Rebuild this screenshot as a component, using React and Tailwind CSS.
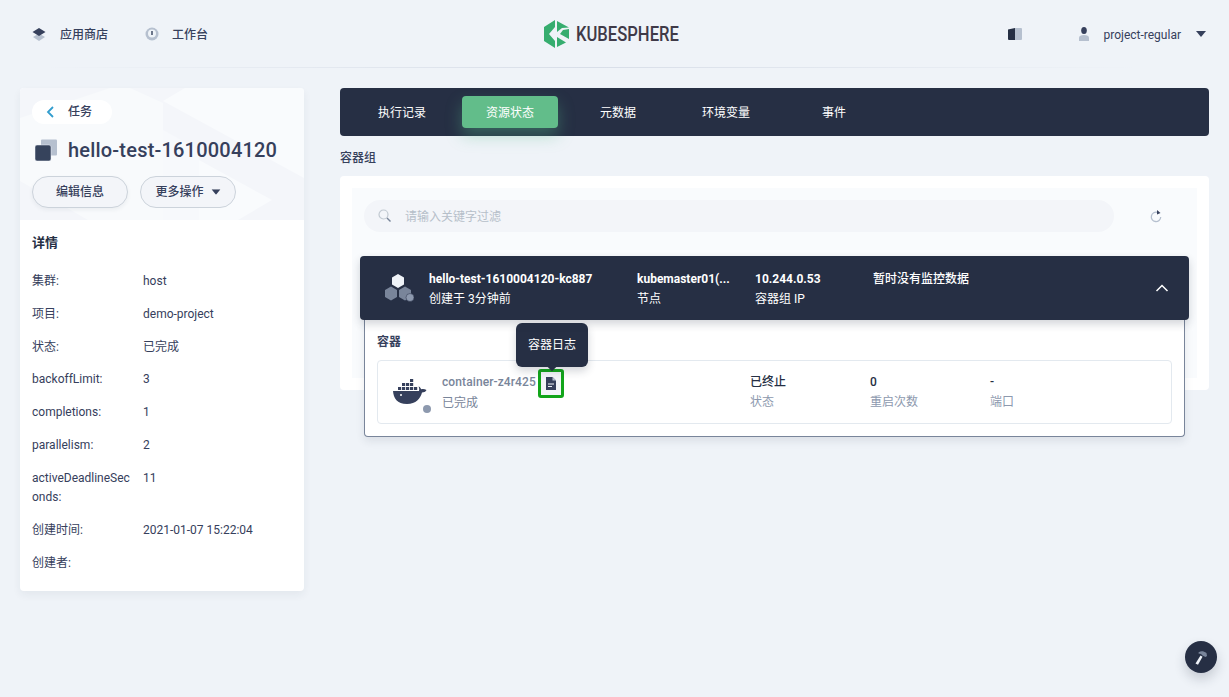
import React from "react";

function Layers() {
  return (
    <svg width="14" height="14" viewBox="0 0 14 14">
      <path d="M7 6.500 1 10 7 14l6-4z" fill="#b6c0cf" />
      <path d="M7 1 .5 5 7 9l6.500-4z" fill="#36405c" />
    </svg>
  );
}
function Gauge() {
  return (
    <svg width="14" height="14" viewBox="0 0 14 14">
      <circle cx="7" cy="7" r="6.500" fill="#b6c0cf" />
      <circle cx="7" cy="6.500" r="4" fill="#eff3f8" />
      <rect x="6.300" y="4" width="1.400" height="4" fill="#36405c" />
    </svg>
  );
}
function Caret({ className = "" }) {
  return (
    <svg width="10" height="6" viewBox="0 0 10 6" className={className}>
      <path d="M0 0h10L5 6z" fill="#36405c" />
    </svg>
  );
}
function Logo() {
  return (
    <svg width="26" height="28" viewBox="0 0 26 28">
      <path d="M0 7 11 0V7L5 14l6 7v7L0 21z" fill="#36ad6f" />
      <path d="M13 1 25 7.500 18 8 13 12z" fill="#36ad6f" />
      <path d="M19 10 25 9V19L16 14z" fill="#36ad6f" />
      <path d="M13 17 22 22.500 13 27z" fill="#36ad6f" />
    </svg>
  );
}
function Book() {
  return (
    <svg width="14" height="12" viewBox="0 0 14 12">
      <path d="M0 1.500 7 0v12H1a1 1 0 0 1-1-1z" fill="#262f44" />
      <path d="M7 0h6a1 1 0 0 1 1 1v10a1 1 0 0 1-1 1H7z" fill="#b6c0cf" />
    </svg>
  );
}
function User() {
  return (
    <svg width="12" height="14" viewBox="0 0 12 14">
      <ellipse cx="6" cy="3.500" rx="2.800" ry="3.500" fill="#36405c" />
      <path d="M1 14V10.500C1 9 3 8 6 8s5 1 5 2.500V14z" fill="#b6c0cf" />
    </svg>
  );
}
function Stack() {
  return (
    <svg width="22" height="22" viewBox="0 0 22 22">
      <path d="M6 1.500a1 1 0 0 1 1-1h14a1 1 0 0 1 1 1v14a1 1 0 0 1-1 1H7a1 1 0 0 1-1-1z" fill="#b6c0cf" />
      <rect x="0" y="6" width="16" height="16" rx="2" fill="#36435c" stroke="#eff3f8" strokeWidth="0.500" />
    </svg>
  );
}
function Hexes() {
  return (
    <svg width="32" height="28" viewBox="0 0 32 28">
      <path d="M14 0l6 3.500v7L14 14l-6-3.500v-7z" fill="#eff3f8" />
      <path d="M7 12.500l6 3.500v7l-6 3.500L1 23v-7z" fill="#79859a" />
      <path d="M21 12.500l6 3.500v7l-6 3.500L15 23v-7z" fill="#79859a" />
      <circle cx="26" cy="23.500" r="4" fill="#8d99ae" stroke="#262f44" strokeWidth="0.500" />
    </svg>
  );
}
function Docker() {
  return (
    <svg width="34" height="25" viewBox="0 0 34 25">
      <g fill="#36405c">
        <rect x="5" y="8" width="3.200" height="3" />
        <rect x="9" y="8" width="3.200" height="3" />
        <rect x="13" y="8" width="3.200" height="3" />
        <rect x="17" y="8" width="3.200" height="3" />
        <rect x="9" y="4" width="3.200" height="3" />
        <rect x="13" y="4" width="3.200" height="3" />
        <rect x="17" y="4" width="3.200" height="3" />
        <rect x="17" y="0" width="3.200" height="3" />
        <rect x="21" y="8" width="3.200" height="3" />
        <path d="M0 12h26c.5-2 0-3.500-.5-4.500 1 .3 2 1 2.700 2.800 1.500-.6 3.500-.4 5.300.7-1 1.800-2.600 2.400-4.500 2.500C27.500 19.500 23 25 14 25 4 25 .5 19 0 12z" />
      </g>
      <circle cx="8" cy="16" r="1" fill="#fff" />
    </svg>
  );
}
function DocIcon() {
  return (
    <svg width="12" height="13" viewBox="0 0 12 13">
      <path d="M1 0h6.500L11 3.500V13H1z" fill="#36405c" />
      <path d="M7.500 0 11 3.500H7.500z" fill="#b6c0cf" />
      <path d="M3 6.500h6v1H3zM3 9h4v1H3z" fill="#eff3f8" />
    </svg>
  );
}
function Refresh() {
  return (
    <svg width="12" height="13" viewBox="0 0 12 13">
      <path d="M7.500 2.400A4.700 4.700 0 1 0 10.700 7" fill="none" stroke="#b6c0cf" strokeWidth="1.300" />
      <path d="M7 0l3.500 3L7 4.500z" fill="#36405c" />
    </svg>
  );
}
function Search() {
  return (
    <svg width="14" height="14" viewBox="0 0 14 14">
      <circle cx="5.500" cy="5.500" r="4.500" fill="none" stroke="#c1c9d1" strokeWidth="1.200" />
      <path d="M9 9l3.500 3.500" stroke="#79859a" strokeWidth="1.400" />
    </svg>
  );
}
function Hammer() {
  return (
    <svg width="16" height="16" viewBox="0 0 16 16">
      <path d="M2.500 14.500 7.500 6.500l2 1.200-4.500 8z" fill="#eff3f8" />
      <path d="M5.500 3.500C8 1.500 10.500 2 13.500 4l.5 3-1.500 1-3-1.500L8 5 5.500 4.500z" fill="#79859a" />
    </svg>
  );
}
function HeaderPattern() {
  return (
    <svg className="absolute inset-0 w-full h-full" viewBox="0 0 284 132" preserveAspectRatio="none">
      <path d="M143 13 165 0H284V90z" fill="#f9fbfd" />
      <path d="M0 30 90 0h20L143 15V132H68L0 93z" fill="#f8fafc" />
      <path d="M143 42 179 62V132H143z" fill="#f7f9fc" />
      <path d="M179 72 252 112 218 132H179z" fill="#f9fbfd" />
    </svg>
  );
}

const details = [
  ["集群:", "host"],
  ["项目:", "demo-project"],
  ["状态:", "已完成"],
  ["backoffLimit:", "3"],
  ["completions:", "1"],
  ["parallelism:", "2"],
  ["activeDeadlineSeconds:", "11"],
  ["创建时间:", "2021-01-07 15:22:04"],
  ["创建者:", ""],
];

const tabs = [
  ["执行记录", "w-[96px] mr-[12px]", false],
  ["资源状态", "w-[96px]", true],
  ["元数据", "w-[120px]", false],
  ["环境变量", "w-[96px]", false],
  ["事件", "w-[120px]", false],
];

export default function App() {
  return (
    <div
      className="relative w-[1229px] h-[697px] overflow-hidden bg-[#eff3f8] text-[#262f44] text-xs antialiased"
      style={{ fontFamily: 'Roboto, "Noto Sans CJK SC", sans-serif' }}
    >
      <header className="relative h-[68px] flex items-center pl-[32px] pr-[23px]">
        <div className="flex items-center w-[500px]">
          <Layers />
          <span className="ml-[14px] pt-[2px] font-medium text-[#36405c]">应用商店</span>
          <span className="ml-[37px]"><Gauge /></span>
          <span className="ml-[13px] pt-[2px] font-medium text-[#36405c]">工作台</span>
        </div>
        <div className="flex items-center ml-[12px]">
          <Logo />
          <span className="ml-[6px] w-[103px] text-[20px] leading-none font-medium text-[#3f3a48] origin-left scale-x-[0.83] whitespace-nowrap">KUBESPHERE</span>
        </div>
        <div className="ml-auto flex items-center">
          <Book />
          <span className="ml-[56px]"><User /></span>
          <span className="ml-[14px] pt-[1px] text-[#36405c]">project-regular</span>
          <span className="ml-[15px]"><Caret /></span>
        </div>
        <div className="absolute bottom-0 left-[40px] w-[1100px] h-px bg-gradient-to-r from-transparent via-[#d8dee8] to-transparent" />
      </header>

      <div className="flex items-start pt-[20px] pl-[20px] pr-[20px] gap-[36px]">
        <aside className="w-[284px] h-[503px] shrink-0 bg-white rounded shadow-[0_4px_8px_rgba(36,46,66,0.06)] overflow-hidden">
          <div className="relative h-[132px] bg-[#f4f6fa]">
            <HeaderPattern />
            <div className="relative px-[12px] pt-[12px]">
              <div className="w-[80px] h-[24px] rounded-full bg-white flex items-center pl-[14px]">
                <svg width="8" height="12" viewBox="0 0 8 12"><path d="M7 1 2 6l5 5" fill="none" stroke="#329dce" strokeWidth="1.800" /></svg>
                <span className="ml-[14px] font-medium text-[#36405c]">任务</span>
              </div>
              <div className="flex items-center mt-[15px] h-[22px]">
                <span className="ml-[3px]"><Stack /></span>
                <span className="ml-[11px] text-[20px] leading-[28px] font-medium tracking-[0.2px] text-[#36405c] whitespace-nowrap">hello-test-1610004120</span>
              </div>
              <div className="flex gap-[12px] mt-[15px]">
                <button className="w-[96px] h-[32px] rounded-full border border-[#ccd3db] bg-[#f3f5f9] font-medium text-[#36405c] shadow-[0_2px_4px_rgba(36,46,66,0.06)]">编辑信息</button>
                <button className="w-[96px] h-[32px] rounded-full border border-[#ccd3db] bg-[#f3f5f9] font-medium text-[#36405c] flex items-center justify-center gap-[7px]">
                  更多操作<Caret className="scale-90" />
                </button>
              </div>
            </div>
          </div>
          <div className="px-[12px] pt-[13px]">
            <h3 className="text-[13px] leading-[20px] font-semibold text-[#262f44]">详情</h3>
            <dl className="mt-[12.200px]">
              {details.map(([k, v]) => (
                <div key={k} className="flex py-[6.800px] leading-[19.200px] min-h-[32.800px]">
                  <dt className="w-[111px] pr-[8px] shrink-0 text-[#36405c] break-all">{k}</dt>
                  <dd className="text-[#36405c]">{v}</dd>
                </div>
              ))}
            </dl>
          </div>
        </aside>

        <main className="flex-1 min-w-0">
          <nav className="h-[48px] rounded bg-[#262f44] flex items-center pl-[14px]">
            {tabs.map(([t, w, active]) => (
              <div key={t} className={`${w} h-[32px] pt-[1px] flex items-center justify-center ${active ? "rounded bg-[#62bd8a] shadow-[0_8px_16px_rgba(85,188,138,0.36)]" : ""} text-white`}>
                {t}
              </div>
            ))}
          </nav>
          <h4 className="mt-[12px] h-[20px] leading-[20px] font-medium text-[#36405c]">容器组</h4>
          <section className="relative mt-[8px] h-[214px] bg-white rounded p-[12px]">
            <div className="h-full bg-[#f9fbfd] pl-[12px] pr-[8px] pt-[12px]">
              <div className="flex items-center">
                <div className="w-[750px] h-[32px] rounded-full bg-[#f3f5f9] flex items-center pl-[14px] text-[#c1c9d1]">
                  <Search />
                  <span className="ml-[13px] pt-[1px] text-[#b6bfc9]">请输入关键字过滤</span>
                </div>
                <span className="ml-[36px]"><Refresh /></span>
              </div>
            </div>
            <div className="absolute left-[20px] top-[80px] w-[829px] z-10">
              <div className="h-[64px] rounded bg-[#262f44] flex items-center text-white shadow-[0_4px_8px_rgba(36,46,66,0.2)] relative z-10">
                <span className="ml-[24px] w-[45px]"><Hexes /></span>
                <div className="w-[208px] leading-[20px] mt-[2px]">
                  <div className="font-bold">hello-test-1610004120-kc887</div>
                  <div>创建于 3分钟前</div>
                </div>
                <div className="w-[118px] leading-[20px] mt-[2px]">
                  <div className="font-bold">kubemaster01(...</div>
                  <div>节点</div>
                </div>
                <div className="w-[118px] leading-[20px] mt-[2px]">
                  <div className="font-bold">10.244.0.53</div>
                  <div>容器组 IP</div>
                </div>
                <div className="self-start mt-[13px] leading-[20px] font-medium">暂时没有监控数据</div>
                <svg className="ml-auto mr-[20px]" width="14" height="8" viewBox="0 0 14 8"><path d="M1.500 7 7 1.500 12.500 7" fill="none" stroke="#fff" strokeWidth="1.500" /></svg>
              </div>
              <div className="mx-[4px] h-[117px] bg-white rounded-b border border-t-0 border-[#79859a] shadow-[0_4px_8px_rgba(36,46,66,0.1)] px-[12px] pt-[12px]">
                <div className="h-[20px] leading-[20px] font-semibold text-[#36405c]">容器</div>
                <div className="mt-[8px] h-[64px] rounded border border-[#e3e9ef] flex items-center">
                  <span className="relative ml-[15px] w-[49px] -mt-[1px]">
                    <Docker />
                    <span className="absolute left-[30px] top-[26px] w-[8px] h-[8px] rounded-full bg-[#8d99ae]" />
                  </span>
                  <div className="w-[308px] leading-[20px]">
                    <div className="relative flex items-center">
                      <span className="font-medium tracking-[0.1px] text-[#79859a]">container-z4r425</span>
                      <span className="ml-[2.400px] w-[26px] h-[29px] -my-[4px] translate-y-[1px] rounded-[3px] border-[3px] border-[#12a51a] flex items-center justify-center bg-[#f3f5f9]">
                        <DocIcon />
                      </span>
                      <div className="absolute left-[74px] -top-[49px] w-[72px] h-[44px] rounded-md bg-[#262f44] text-white text-[12px] flex items-center justify-center shadow-[0_4px_8px_rgba(36,46,66,0.2)]">
                        容器日志
                        <span className="absolute left-1/2 -translate-x-1/2 -bottom-[3px] w-[6px] h-[6px] rotate-45 bg-[#262f44]" />
                      </div>
                    </div>
                    <div className="text-[#79859a]">已完成</div>
                  </div>
                  <div className="w-[120px] leading-[20px]">
                    <div className="font-medium text-[#262f44]">已终止</div>
                    <div className="text-[#8d99ae]">状态</div>
                  </div>
                  <div className="w-[120px] leading-[20px]">
                    <div className="font-medium text-[#262f44]">0</div>
                    <div className="text-[#8d99ae]">重启次数</div>
                  </div>
                  <div className="leading-[20px]">
                    <div className="font-medium text-[#262f44]">-</div>
                    <div className="text-[#8d99ae]">端口</div>
                  </div>
                </div>
              </div>
            </div>
          </section>
        </main>
      </div>

      <div className="absolute left-[1185px] top-[641px] w-[32px] h-[32px] rounded-full bg-[#262f44] flex items-center justify-center shadow-[0_6px_12px_rgba(36,46,66,0.2)]">
        <Hammer />
      </div>
    </div>
  );
}
